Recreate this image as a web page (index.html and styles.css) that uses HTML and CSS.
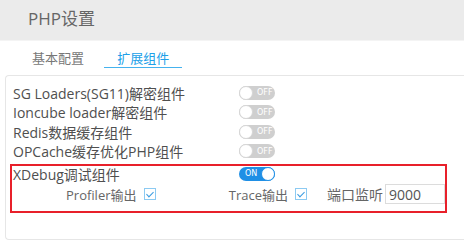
FILE: index.html
```html
<!DOCTYPE html>
<html lang="zh-CN">
<head>
  <meta charset="UTF-8">
  <title>PHP设置</title>
  <link rel="stylesheet" href="styles.css">
</head>
<body>

<div class="header">
  <h1>PHP设置</h1>
</div>

<div class="tabs">
  <span class="tab">基本配置</span>
  <span class="tab active">扩展组件</span>
</div>

<div class="panel">
  <div class="row">
    <span class="name">SG Loaders(SG11)解密组件</span>
    <span class="switch"><i class="knob"></i><b>OFF</b></span>
  </div>
  <div class="row">
    <span class="name">Ioncube loader解密组件</span>
    <span class="switch"><i class="knob"></i><b>OFF</b></span>
  </div>
  <div class="row">
    <span class="name">Redis数据缓存组件</span>
    <span class="switch"><i class="knob"></i><b>OFF</b></span>
  </div>
  <div class="row">
    <span class="name">OPCache缓存优化PHP组件</span>
    <span class="switch"><i class="knob"></i><b>OFF</b></span>
  </div>

  <div class="xdebug">
    <div class="row">
      <span class="name">XDebug调试组件</span>
      <span class="switch on"><b>ON</b><i class="knob"></i></span>
    </div>
    <div class="options">
      <label class="opt first">Profiler输出 <span class="check"></span></label>
      <label class="opt second">Trace输出 <span class="check"></span></label>
      <label class="opt port">端口监听 <input type="text" value="9000"></label>
    </div>
  </div>
</div>

</body>
</html>
```

FILE: styles.css
```css
body {
  margin: 0;
  font-family: "Open Sans", "Noto Sans CJK SC", sans-serif;
  color: #555;
  background: #fff;
}
.header {
  height: 40px;
  background: #ebebeb;
  border-bottom: 1px solid #f4f4f4;
}
.header h1 {
  margin: 0;
  padding-left: 28px;
  font-size: 17px;
  font-weight: normal;
  line-height: 38px;
  color: #666;
}
.tabs {
  height: 34px;
  padding-left: 19px;
  box-sizing: border-box;
  padding-top: 5px;
}
.tab {
  display: inline-block;
  padding: 0 13px;
  margin-right: 3px;
  font-size: 13px;
  line-height: 17px;
  color: #777;
  border-bottom: 1px solid transparent;
}
.tab.active {
  color: #20a0e8;
  border-bottom-color: #45b2ee;
}
.panel {
  margin-left: 5px;
  height: 165px;
  box-sizing: border-box;
  border: 1px solid #e6e6e6;
  border-right: none;
  border-radius: 4px 0 0 4px;
  padding: 7px 0 0 7px;
}
.row {
  display: flex;
  align-items: center;
  height: 19.5px;
  font-size: 14px;
  color: #4f4f4f;
}
.name {
  width: 226px;
  white-space: nowrap;
}
.switch {
  position: relative;
  display: flex;
  align-items: center;
  width: 36px;
  height: 14px;
  border-radius: 7px;
  background: #cfcfcf;
  box-sizing: border-box;
}
.switch .knob {
  width: 14px;
  height: 14px;
  border-radius: 50%;
  background: #fff;
  box-sizing: border-box;
  border: 1px solid #d6d6d6;
}
.switch b {
  font-weight: normal;
  font-size: 8px;
  color: #fff;
  margin-left: 4px;
  font-family: "DejaVu Sans", sans-serif;
}
.switch.on {
  background: #1f8fe5;
  justify-content: space-between;
}
.switch.on b {
  margin-left: 6px;
}
.switch.on .knob {
  border: 1px solid #1f8fe5;
}
.xdebug {
  margin-left: -3px;
  margin-top: 3px;
  width: 437px;
  box-sizing: border-box;
  border: 2px solid #e8202a;
  padding: 0 0 0 1px;
  height: 49px;
}
.xdebug .row {
  height: 15px;
}
.options {
  display: flex;
  align-items: center;
  height: 26px;
  font-size: 13px;
  color: #666;
}
.opt {
  display: flex;
  align-items: center;
  justify-content: flex-end;
  gap: 7px;
  white-space: nowrap;
}
.opt.first {
  width: 143px;
}
.opt.second {
  width: 152px;
}
.opt.port {
  margin-left: 20px;
  gap: 2px;
  font-size: 14px;
}
.check {
  width: 12px;
  height: 12px;
  box-sizing: border-box;
  border: 1px solid #8ccaf2;
  position: relative;
}
.check::after {
  content: "";
  position: absolute;
  left: 3px;
  top: 1px;
  width: 3px;
  height: 6px;
  border: solid #3a9be0;
  border-width: 0 1px 1px 0;
  transform: rotate(45deg);
}
.opt input {
  width: 60px;
  height: 20px;
  box-sizing: border-box;
  border: 1px solid #dcdcdc;
  padding: 0 3px;
  font: 14px "Open Sans", sans-serif;
  color: #555;
  outline: none;
}
```
